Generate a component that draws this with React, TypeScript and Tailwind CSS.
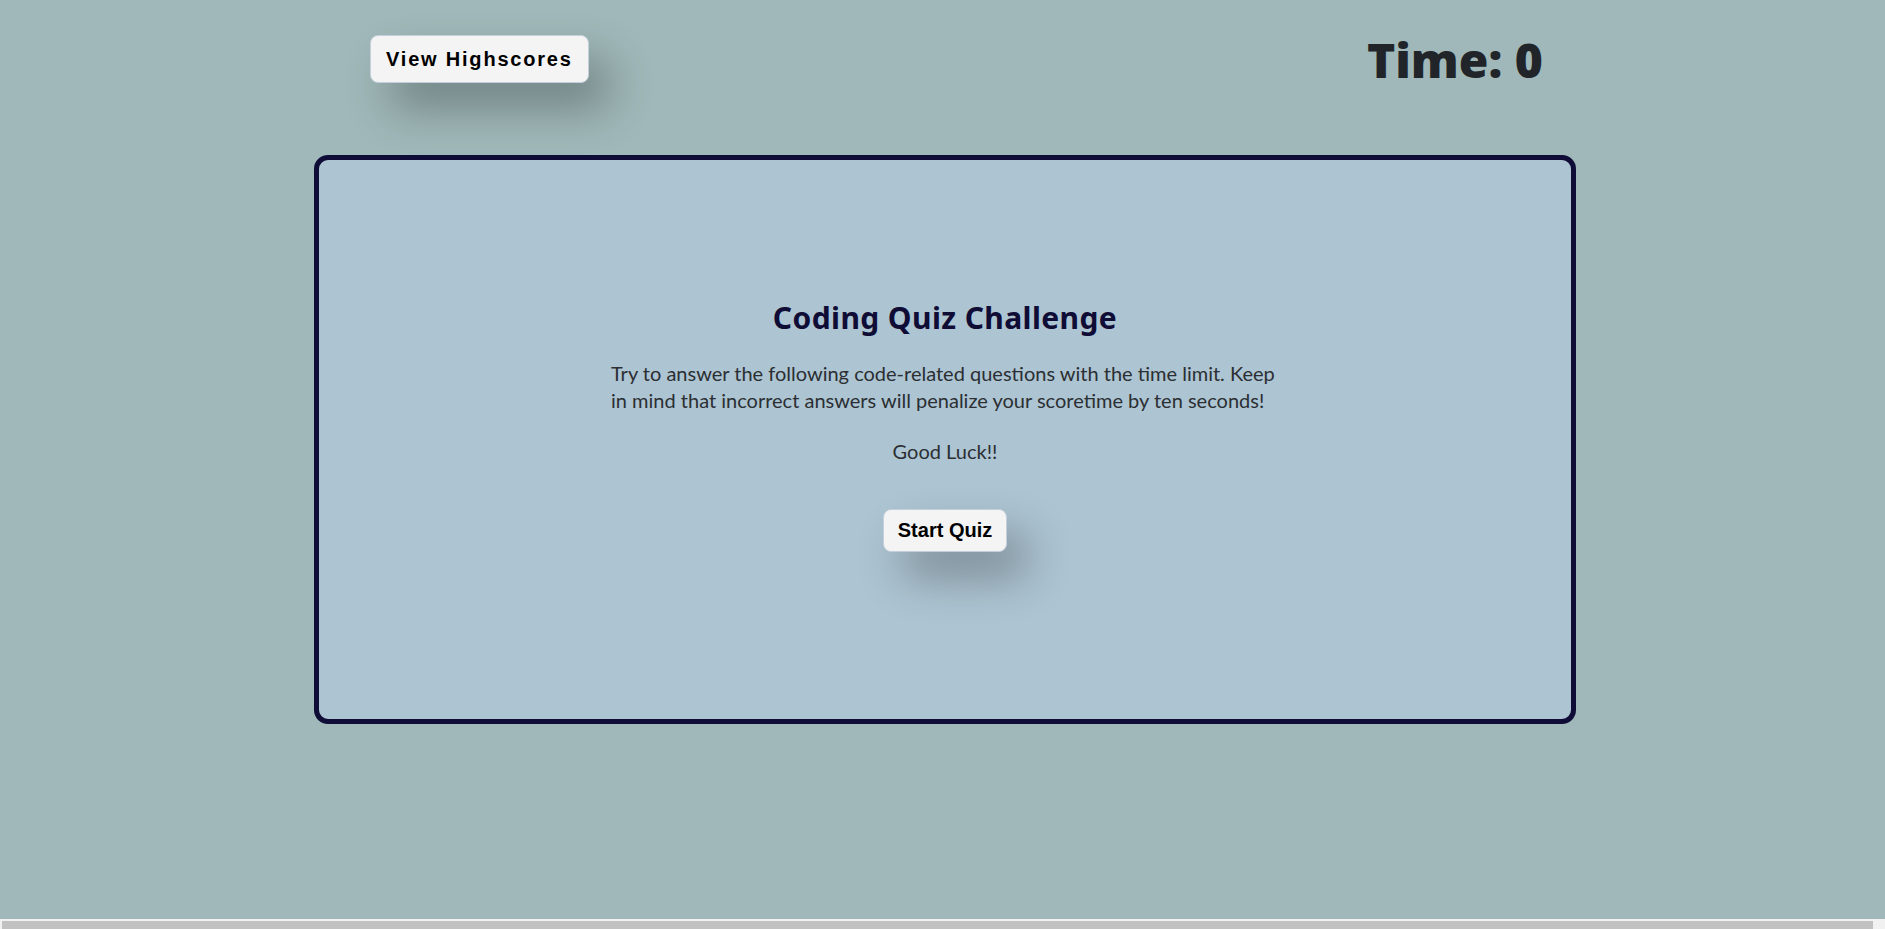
import React from "react";

export default function App() {
  return (
    <div className="h-[929px] w-full flex flex-col overflow-hidden bg-[#a0b8b9]">
      <div className="flex-1">
        <header className="flex items-start justify-between pt-[32px] pl-[370px] pr-[342px]">
          <button className="mt-[3px] rounded-[8px] border border-[#c3d0dc] bg-[#f4f4f4] px-[15px] pt-[12px] pb-[11px] text-[20px] leading-[23px] font-bold tracking-[1.8px] text-black shadow-[20px_25px_45px_rgba(0,0,0,0.3)] font-['Liberation_Sans',Arial,sans-serif]">
            View Highscores
          </button>
          <div className="text-[48px] leading-[56px] font-black text-[#212529] font-['Noto_Sans','Open_Sans',sans-serif]">
            Time: 0
          </div>
        </header>

        <main className="ml-[314px] mt-[67px] w-[1262px] h-[569px] rounded-[14px] border-[5px] border-[#100c38] bg-[#adc4d2]">
          <div className="flex flex-col items-center pt-[140px]">
            <h2 className="text-[30px] leading-[36px] font-bold tracking-[0.4px] text-[#0f0c35] font-['Noto_Sans',sans-serif]">
              Coding Quiz Challenge
            </h2>
            <p className="mt-[24px] w-[668px] text-left text-[20px] leading-[26.6px] text-[#2b2f33] font-['Lato','Noto_Sans',sans-serif]">
              Try to answer the following code-related questions with the time limit. Keep in mind that incorrect answers will penalize your scoretime by ten seconds!
            </p>
            <p className="mt-[25px] text-[20px] leading-[26.6px] text-[#2b2f33] font-['Lato','Noto_Sans',sans-serif]">
              Good Luck!!
            </p>
            <button className="mt-[44px] rounded-[8px] border border-[#c3d0dc] bg-[#f4f4f4] px-[14px] py-[9px] text-[20px] leading-[23px] font-bold text-black shadow-[20px_25px_45px_rgba(0,0,0,0.3)] font-['Liberation_Sans',Arial,sans-serif]">
              Start Quiz
            </button>
          </div>
        </main>
      </div>
      <div className="h-[10px] shrink-0 bg-[#f1f1f1] pt-[2px] pl-[2px]">
        <div className="h-[8px] w-[1871px] bg-[#c1c1c1]" />
      </div>
    </div>
  );
}
